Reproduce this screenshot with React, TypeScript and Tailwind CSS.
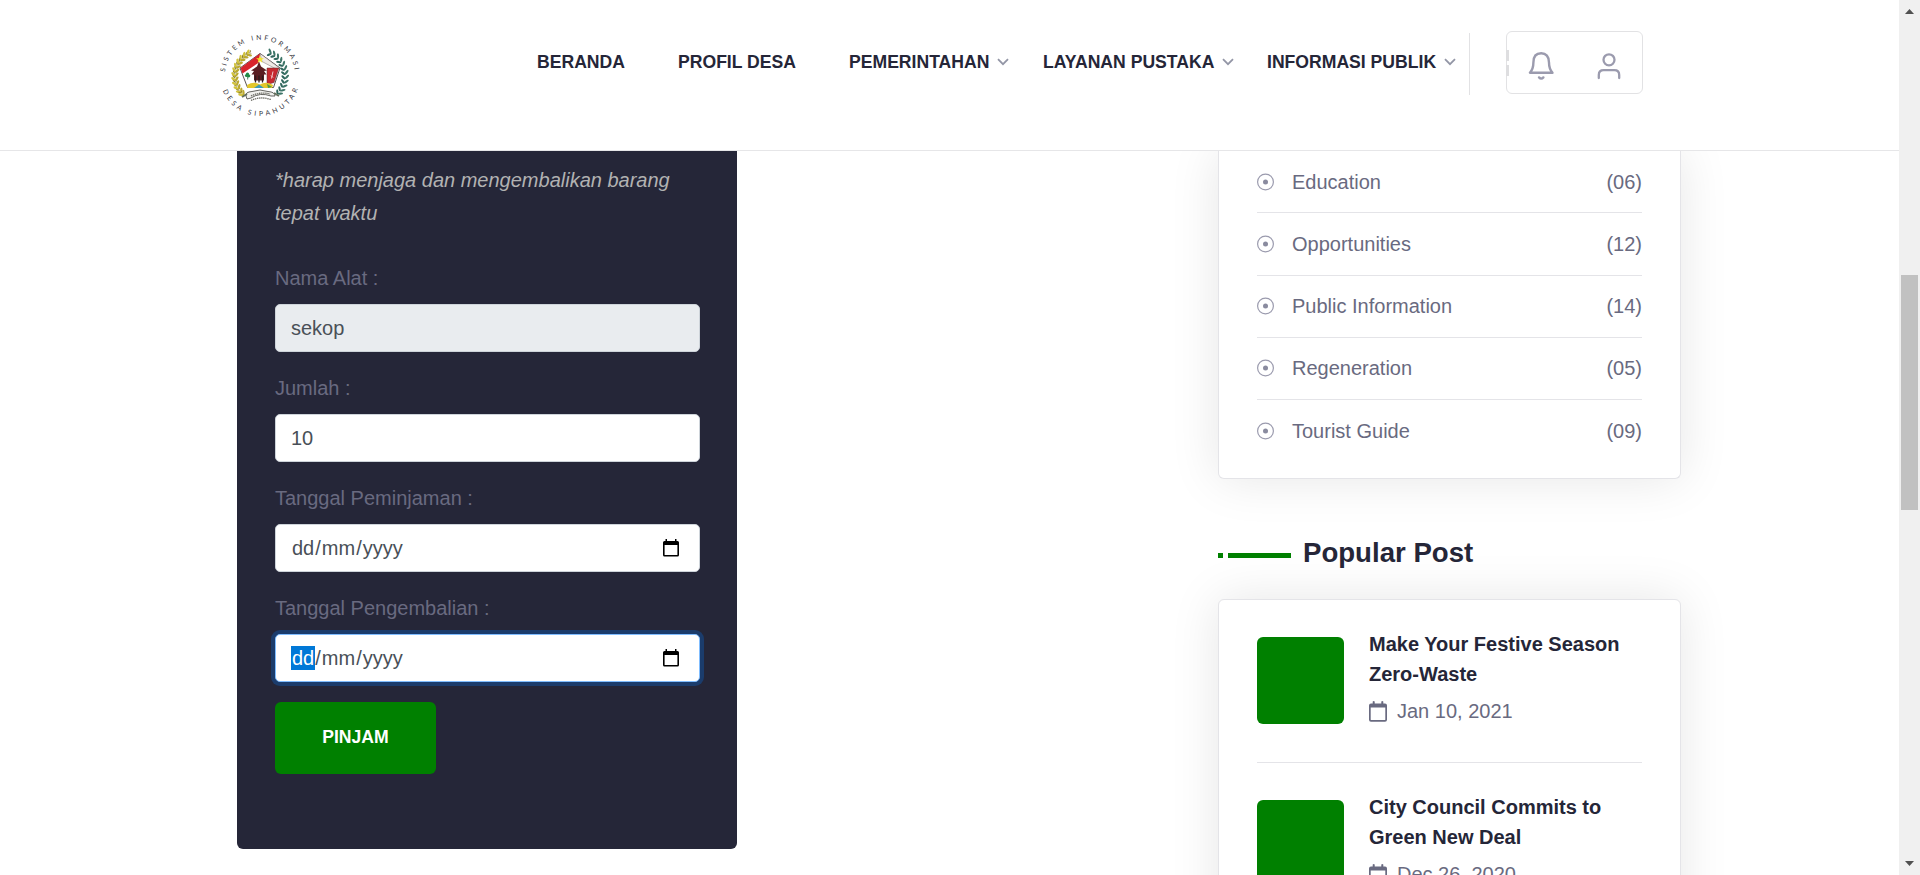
import React from "react";

const NAV = [
  { label: "BERANDA", width: "w-[141px]", menu: false },
  { label: "PROFIL DESA", width: "w-[171px]", menu: false },
  { label: "PEMERINTAHAN", width: "w-[194px]", menu: true },
  { label: "LAYANAN PUSTAKA", width: "w-[224px]", menu: true },
  { label: "INFORMASI PUBLIK", width: "w-[202px]", menu: true },
];

const CATEGORIES = [
  { name: "Education", count: "(06)" },
  { name: "Opportunities", count: "(12)" },
  { name: "Public Information", count: "(14)" },
  { name: "Regeneration", count: "(05)" },
  { name: "Tourist Guide", count: "(09)" },
];

const POSTS = [
  { title: "Make Your Festive Season Zero-Waste", date: "Jan 10, 2021" },
  { title: "City Council Commits to Green New Deal", date: "Dec 26, 2020" },
];

const LEFT_LEAVES = [243, 233, 223, 213, 203, 193, 183, 173, 163, 153, 143, 135];
const RIGHT_LEAVES = [-68, -58, -48, -38, -28, -18, -8, 2, 12, 22, 32, 41];

function Logo() {
  return (
    <svg width="90" height="90" viewBox="-45 -45 90 90" className="block">
      <defs>
        <path id="arcTop" d="M-33.500 9A35 35 0 1 1 33.500 9" />
        <path id="arcBottom" d="M-40 0A40 40 0 0 0 40 0" />
      </defs>
      <g fontFamily="Lato, sans-serif" fontSize="6.8" fill="#33333b">
        <text>
          <textPath href="#arcTop" startOffset="13" textLength="102">SISTEM INFORMASI</textPath>
        </text>
        <text>
          <textPath href="#arcBottom" startOffset="15" textLength="97">DESA SIPAHUTAR</textPath>
        </text>
      </g>
      {LEFT_LEAVES.map((a) => (
        <g key={a} transform={`rotate(${a}) translate(25 0)`}>
          <ellipse cx="1.600" cy="0" rx="3" ry="1.300" fill="#d2c33c" transform="rotate(50 1.600 0)" />
          <ellipse cx="-1.600" cy="0" rx="2.700" ry="1.200" fill="#bba92f" transform="rotate(-50 -1.600 0)" />
          <ellipse cx="1" cy="2.200" rx="2" ry="0.500" fill="#857a2b" transform="rotate(50 1 2.200)" />
          <circle cx="-1" cy="2" r="0.500" fill="#857a2b" />
        </g>
      ))}
      {RIGHT_LEAVES.map((a) => (
        <g key={a} transform={`rotate(${a}) translate(25 0)`}>
          <ellipse cx="1.900" cy="0" rx="2.800" ry="1.100" fill="#3d7568" transform="rotate(-45 1.900 0)" />
          <ellipse cx="-1.600" cy="0.500" rx="2.600" ry="1.100" fill="#2f665c" transform="rotate(45 -1.600 0.500)" />
        </g>
      ))}
      <g transform="translate(0 -1.500)">
        <path d="M0 -21L20 -6.500L13.500 13H-12.500L-20 -6.500Z" fill="#fff" stroke="#4a4040" strokeWidth="0.900" />
        <path d="M0 -21L-19.500 -6.500L-17.500 -1L-1 -12Z" fill="#d8232b" />
        <path d="M0 -21L2 -13L17 -5L19.500 -6.500Z" fill="#efe9e6" stroke="#5a4a4a" strokeWidth="0.400" />
        <path d="M7 -6.500H18.800L14 8L7 10Z" fill="#c62930" stroke="#5d2426" strokeWidth="0.500" />
        <path d="M13 -3L11.500 4M11 1L13 3" stroke="#f3dcdc" strokeWidth="0.900" />
        <path d="M-1 -13L-3 -8L-9 -4L-6 -3.500L-8.500 0H6.500L4 -3.500L7 -4L1 -8ZM-6 0H4V6H-6Z" fill="#5a1d22" />
        <path d="M-4.500 1V8M-1 1V8M2.500 1V8" stroke="#2d1a1c" strokeWidth="1.300" />
        <path d="M0 -19L1 -16.200H3.900L1.600 -14.500L2.400 -11.700L0 -13.400L-2.400 -11.700L-1.600 -14.500L-3.900 -16.200H-1Z" fill="#f6e62c" />
        <circle cx="-13.500" cy="1" r="1.600" fill="#1f8a45" />
        <circle cx="-11.300" cy="1.300" r="1.600" fill="#1f8a45" />
        <circle cx="-12.500" cy="-0.500" r="1.600" fill="#1f8a45" />
        <path d="M-12.300 2V5" stroke="#1f6a35" strokeWidth="0.800" />
        <path d="M-12.500 13.500L-13 10.500Q-6 6.500 0 10Q6 6.500 13 10.500L12 13.500Z" fill="#e3c72b" />
        <path d="M-6 13.500L-1 10L4 13.500Z" fill="#3a9bb8" />
        <path d="M7 9.500L12 12.500L8 13.500Z" fill="#4b9a48" />
      </g>
      <path d="M-14 20Q-15 16 -8 15.500Q0 12.500 8 15.500Q15 16 15 20L11 20Q0 16 -9 22L-13 23Z" fill="#f1f1ee" stroke="#54544f" strokeWidth="0.900" />
      <path d="M-9 20Q0 15.500 10 18M-9 24.500Q0 20 11 23.500" fill="none" stroke="#6b6b63" strokeWidth="1.300" strokeDasharray="1.400 0.700" />
      <path d="M-18 21L-13 18M19 20L14 17" stroke="#65705c" strokeWidth="2" />
    </svg>
  );
}

function Chevron() {
  return (
    <svg width="12" height="8" viewBox="0 0 12 8" fill="none" stroke="#9396a6" strokeWidth="1.800">
      <path d="M1 1.200L6 6.200L11 1.200" />
    </svg>
  );
}

function DateIcon() {
  return (
    <svg width="16" height="18" viewBox="0 0 16 18" className="block">
      <path
        fill="#000"
        fillRule="evenodd"
        d="M2.500 0H4V2H12V0H13.500V2H14.500Q16 2 16 3.500V16Q16 17.500 14.500 17.500H1.500Q0 17.500 0 16V3.500Q0 2 1.500 2H2.500ZM1.600 6V15.900H14.400V6Z"
      />
    </svg>
  );
}

function PostCalendar() {
  return (
    <svg width="18" height="21" viewBox="0 0 18 21" className="block">
      <path
        fill="#696a80"
        fillRule="evenodd"
        d="M3.700 0.500Q4.700 -0.500 5.700 0.500V2.400H12.300V0.500Q13.300 -0.500 14.300 0.500V2.400H16Q18 2.400 18 4.400V18.800Q18 20.700 16 20.700H2Q0 20.700 0 18.800V4.400Q0 2.400 2 2.400H3.700ZM1.700 6.600V18.400Q1.700 19 2.300 19H15.700Q16.300 19 16.300 18.400V6.600Z"
      />
    </svg>
  );
}

function Field({ label, children, className }: { label: string; children: React.ReactNode; className: string }) {
  return (
    <div className="mb-4 h-[94px]">
      <div className="h-[46px] pt-[5px] text-xl leading-[30px] text-[#696a80]">{label}</div>
      <div className={`flex h-12 items-center justify-between rounded-[5px] border pr-5 pl-[15px] text-xl leading-[30px] text-[#495057] ${className}`}>
        {children}
      </div>
    </div>
  );
}

function DateText({ active = false }: { active?: boolean }) {
  return (
    <span className="flex items-center leading-6">
      <span className={active ? "bg-[#0078d7] px-px text-white" : "px-px"}>dd</span>
      <span>/</span>
      <span className="px-px">mm</span>
      <span>/</span>
      <span className="px-px">yyyy</span>
    </span>
  );
}

function Header() {
  return (
    <header className="relative flex h-[151px] shrink-0 items-start border-b border-[#e6e6e8] bg-white">
      <div className="ml-[215px] w-[322px] pt-[31px]">
        <Logo />
      </div>
      <nav className="flex pt-[50px] text-[17.6px] leading-6 font-bold text-[#252638]">
        {NAV.map((item) => (
          <a key={item.label} className={`flex shrink-0 items-center gap-2 whitespace-nowrap ${item.width}`}>
            {item.label}
            {item.menu && <Chevron />}
          </a>
        ))}
      </nav>
      <div className="mt-[33px] h-[62px] w-px bg-[#e2e2e4]" />
      <div className="relative mt-[31px] ml-9 flex h-[63px] w-[137px] rounded-md border border-[#e2e2e4]">
        <div className="absolute top-[18px] -left-px flex flex-col gap-1">
          <span className="h-[11px] w-[3px] bg-[#dedee0]" />
          <span className="h-[11px] w-[3px] bg-[#dedee0]" />
        </div>
        <svg width="26" height="30" viewBox="0 0 26 30" className="mt-[19px] ml-[21px]" fill="none" stroke="#9b9bae" strokeWidth="2.400" strokeLinecap="round" strokeLinejoin="round">
          <path d="M1.900 21.700H24.500C22 19 21 16 21 11.500C21 5.500 18 2.300 13.200 2.300C8.400 2.300 5.400 5.500 5.400 11.500C5.400 16 4.400 19 1.900 21.700Z" />
          <path d="M11 26.400Q13.200 28.800 15.400 26.400" />
        </svg>
        <svg width="24" height="28" viewBox="0 0 24 28" className="mt-5 ml-[43px]" fill="none" stroke="#9b9bae" strokeWidth="2.300" strokeLinecap="round">
          <circle cx="12" cy="7.800" r="5.500" />
          <path d="M1.800 26V23Q1.800 18.200 6.600 18.200H17.400Q22.200 18.200 22.200 23V26" />
        </svg>
      </div>
    </header>
  );
}

function LoanForm() {
  return (
    <section className="h-[698px] w-[500px] shrink-0 rounded-b-md bg-[#252638] px-[38px] pt-[13px]">
      <p className="h-[86px] text-xl leading-[33px] text-[#b2b2b2] italic">
        *harap menjaga dan mengembalikan barang tepat waktu
      </p>
      <div className="w-[425px] pt-2">
        <Field label="Nama Alat :" className="border-[#ced4da] bg-[#e9ecef]">
          <span>sekop</span>
        </Field>
        <Field label="Jumlah :" className="border-[#ced4da] bg-white">
          <span>10</span>
        </Field>
        <Field label="Tanggal Peminjaman :" className="border-[#ced4da] bg-white">
          <DateText />
          <DateIcon />
        </Field>
        <Field label="Tanggal Pengembalian :" className="border-[#80bdff] bg-white shadow-[0_0_0_4px_#1b3c6c]">
          <DateText active />
          <DateIcon />
        </Field>
        <button className="mt-1 h-[72px] w-[161px] rounded-md bg-[#008000] pb-0.5 text-[17.6px] font-bold text-white">PINJAM</button>
      </div>
    </section>
  );
}

function Sidebar() {
  return (
    <aside className="w-[463px] shrink-0">
      <div className="h-[328px] rounded-b-md border border-t-0 border-[#e4e4e8] bg-white px-[38px] shadow-[0_0_50px_rgba(0,0,0,0.1)]">
        {CATEGORIES.map((c, i) => (
          <div
            key={c.name}
            className={`flex h-[62.25px] items-center justify-between text-xl text-[#696a80] ${
              i === 4 ? "" : "border-b border-[#e4e4e8]"
            }`}
          >
            <span className="flex items-center gap-[18px]">
              <svg width="17" height="18" viewBox="0 0 17 18" fill="none">
                <circle cx="8.500" cy="9" r="7.900" stroke="#9b9bae" strokeWidth="1.200" />
                <circle cx="8.500" cy="9" r="2.500" fill="#8a8b9f" />
              </svg>
              {c.name}
            </span>
            <span>{c.count}</span>
          </div>
        ))}
      </div>
      <div className="mt-[53px] flex h-[42px] items-center gap-[5px]">
        <span className="mt-[5px] size-[5px] bg-[#008000]" />
        <span className="mt-[5px] h-[5px] w-[63px] bg-[#008000]" />
        <h2 className="ml-[7px] text-[27.6px] leading-[42px] font-bold text-[#252638]">Popular Post</h2>
      </div>
      <div className="mt-[25px] h-[400px] rounded-md border border-[#e4e4e8] bg-white px-[38px] pt-[37px] shadow-[0_0_50px_rgba(0,0,0,0.1)]">
        {POSTS.map((p) => (
          <article key={p.title} className="mb-[37px] flex h-[126px] items-start gap-[25px] border-b border-[#e4e4e8]">
            <div className="size-[87px] shrink-0 rounded-md bg-[#008000]" />
            <div className="-mt-2">
              <h3 className="text-xl leading-[30px] font-bold text-[#252638]">{p.title}</h3>
              <div className="mt-[7px] flex items-center gap-[10px] text-xl leading-[30px] text-[#696a80]">
                <PostCalendar />
                {p.date}
              </div>
            </div>
          </article>
        ))}
      </div>
    </aside>
  );
}

function Scrollbar() {
  return (
    <div className="flex h-full w-[21px] shrink-0 flex-col items-center bg-[#f0f0f0]">
      <svg width="9" height="5" viewBox="0 0 9 5" className="mt-[9px]">
        <path d="M4.500 0L9 5H0Z" fill="#505050" />
      </svg>
      <div className="mt-[261px] h-[235px] w-[17px] bg-[#c1c1c1]" />
      <svg width="9" height="5" viewBox="0 0 9 5" className="mt-[351px]">
        <path d="M0 0H9L4.500 5Z" fill="#505050" />
      </svg>
    </div>
  );
}

export default function App() {
  return (
    <div className="flex h-[875px] w-[1920px] overflow-hidden bg-white font-['Liberation_Sans',Arial,sans-serif]">
      <div className="flex min-w-0 flex-1 flex-col">
        <Header />
        <main className="flex min-h-0 flex-1 items-start justify-between overflow-hidden pr-[218px] pl-[237px]">
          <LoanForm />
          <Sidebar />
        </main>
      </div>
      <Scrollbar />
    </div>
  );
}
